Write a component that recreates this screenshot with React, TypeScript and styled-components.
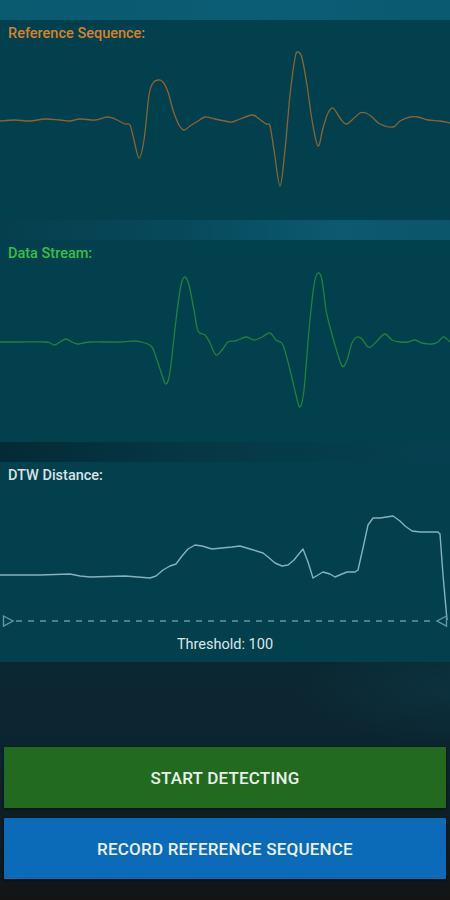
import React from 'react';
import styled, { createGlobalStyle } from 'styled-components';

type Pt = [number, number];

const GlobalStyle = createGlobalStyle`
  html, body {
    margin: 0;
    padding: 0;
    background: #141414;
  }
  body {
    font-family: Roboto, "Noto Sans", "Liberation Sans", sans-serif;
  }
`;

const Screen = styled.div`
  width: 450px;
  height: 900px;
  display: flex;
  flex-direction: column;
  overflow: hidden;
  background: #04404f;
`;

const TopBar = styled.div`
  height: 20px;
  flex: none;
  background: linear-gradient(90deg, #0a5a70 0%, #0b5d75 60%, #0a5a71 100%);
`;

const Divider = styled.div<{ $tone: 'light' | 'dark' }>`
  height: 20px;
  flex: none;
  background: ${(p) =>
    p.$tone === 'light'
      ? 'linear-gradient(90deg, #053f4d 0%, #07495b 40%, #0b5a70 75%, #0a566b 100%)'
      : 'linear-gradient(90deg, #032b35 0%, #053845 45%, #064050 100%)'};
`;

const Panel = styled.section<{ $h: number }>`
  height: ${(p) => p.$h}px;
  flex: none;
  display: flex;
  flex-direction: column;
  background: #02404e;
`;

const Label = styled.div<{ $color: string }>`
  height: 22px;
  box-sizing: border-box;
  padding: 6px 8px 0;
  font-size: 14.5px;
  line-height: 16px;
  font-weight: 500;
  color: ${(p) => p.$color};
  flex: none;
`;

const Chart = styled.svg`
  display: block;
  width: 450px;
  flex: none;
`;

const Threshold = styled.div`
  height: 20px;
  line-height: 20px;
  text-align: center;
  font-size: 14.5px;
  color: #dce6e8;
  flex: none;
`;

const Footer = styled.div`
  flex: 1;
  display: flex;
  flex-direction: column;
  justify-content: flex-end;
  gap: 10px;
  padding: 0 4px 21px;
  background:
    radial-gradient(ellipse 50% 35% at 100% 10%, rgba(14, 70, 86, 0.35), transparent 70%),
    linear-gradient(180deg, #0b2731 0%, #0b2530 40%, #0f1c21 75%, #141414 100%);
`;

const Button = styled.button<{ $bg: string }>`
  height: 61px;
  border: none;
  border-radius: 1px;
  background: ${(p) => p.$bg};
  color: #eaf1ea;
  font-family: Roboto, "Liberation Sans", sans-serif;
  font-size: 17px;
  font-weight: 500;
  letter-spacing: 0.2px;
  box-shadow: 0 1px 3px rgba(0, 0, 0, 0.6);
  cursor: pointer;
`;

const shift = (pts: Pt[], dy: number): Pt[] => pts.map(([x, y]) => [x, y - dy]);

// catmull-rom -> cubic bezier so the waves come out smooth
const smooth = (pts: Pt[]): string => {
  let d = `M${pts[0][0]},${pts[0][1]}`;
  for (let i = 0; i < pts.length - 1; i++) {
    const p0 = pts[i - 1] || pts[i];
    const p1 = pts[i];
    const p2 = pts[i + 1];
    const p3 = pts[i + 2] || p2;
    const c1x = p1[0] + (p2[0] - p0[0]) / 6;
    const c1y = p1[1] + (p2[1] - p0[1]) / 6;
    const c2x = p2[0] - (p3[0] - p1[0]) / 6;
    const c2y = p2[1] - (p3[1] - p1[1]) / 6;
    d += ` C${c1x.toFixed(1)},${c1y.toFixed(1)} ${c2x.toFixed(1)},${c2y.toFixed(1)} ${p2[0]},${p2[1]}`;
  }
  return d;
};

const reference: Pt[] = shift([
  [0, 121], [15, 120], [30, 121], [45, 119], [60, 120], [70, 121], [80, 119], [95, 120],
  [107, 117], [115, 119], [125, 124], [130, 125], [134, 140], [139, 158], [144, 140],
  [149, 95], [153, 83], [158, 80], [163, 82], [168, 92], [173, 110], [179, 125], [184, 130],
  [190, 126], [198, 121], [205, 117], [215, 119], [225, 121], [232, 122], [240, 119],
  [252, 115], [258, 118], [266, 124], [270, 126], [274, 150], [280, 186], [285, 150],
  [290, 95], [295, 58], [298, 52], [302, 58], [307, 85], [312, 120], [318, 146], [323, 128],
  [328, 113], [333, 108], [340, 118], [346, 124], [352, 120], [360, 113], [366, 113],
  [372, 117], [380, 124], [393, 127], [400, 121], [410, 117], [418, 117], [428, 120],
  [440, 121], [450, 123],
], 20);

const stream: Pt[] = shift([
  [0, 342], [20, 342], [45, 342], [50, 343], [55, 345], [60, 342], [66, 339], [72, 342],
  [78, 344], [90, 342], [120, 342], [135, 341], [145, 343], [152, 347], [157, 360],
  [162, 375], [166, 384], [170, 372], [176, 320], [181, 285], [185, 277], [189, 285],
  [194, 310], [198, 331], [205, 335], [210, 343], [216, 355], [222, 350], [228, 342],
  [235, 341], [240, 339], [247, 337], [254, 340], [262, 337], [270, 333], [276, 340],
  [283, 345], [290, 370], [296, 395], [300, 407], [304, 390], [309, 330], [314, 285],
  [318, 273], [322, 280], [326, 310], [330, 327], [335, 345], [342, 366], [347, 360],
  [352, 343], [357, 337], [362, 339], [368, 347], [372, 346], [378, 340], [385, 334],
  [392, 340], [400, 342], [408, 342], [415, 340], [422, 343], [432, 344], [438, 342],
  [443, 337], [447, 339], [450, 342],
], 240);

const distance: Pt[] = shift([
  [0, 575], [40, 575], [70, 574], [80, 576], [90, 577], [125, 576], [150, 578], [156, 576],
  [163, 570], [170, 566], [176, 564], [182, 556], [188, 549], [195, 545], [202, 546],
  [212, 549], [222, 548], [232, 547], [240, 546], [250, 549], [263, 553], [268, 557],
  [275, 563], [282, 566], [288, 565], [294, 560], [298, 555], [303, 549], [308, 562],
  [313, 578], [318, 575], [323, 572], [330, 574], [335, 577], [342, 574], [347, 572],
  [355, 572], [358, 570], [363, 548], [368, 525], [373, 518], [380, 518], [393, 516],
  [400, 521], [405, 526], [412, 531], [420, 532], [438, 532], [440, 534], [443, 575],
  [447, 620],
], 462);

const App: React.FC = () => {
  return (
    <>
      <GlobalStyle />
      <Screen>
        <TopBar />
        <Panel $h={200}>
          <Label $color="#d4822c">Reference Sequence:</Label>
          <Chart height={178} viewBox="0 22 450 178">
            <path d={smooth(reference)} fill="none" stroke="#8c6434" strokeWidth={1.3} />
          </Chart>
        </Panel>
        <Divider $tone="light" />
        <Panel $h={202}>
          <Label $color="#34c043">Data Stream:</Label>
          <Chart height={180} viewBox="0 22 450 180">
            <path d={smooth(stream)} fill="none" stroke="#24803b" strokeWidth={1.3} />
          </Chart>
        </Panel>
        <Divider $tone="dark" />
        <Panel $h={200}>
          <Label $color="#d8e2e4">DTW Distance:</Label>
          <Chart height={151} viewBox="0 22 450 151">
            <polyline
              points={distance.map((p) => p.join(',')).join(' ')}
              fill="none"
              stroke="#86b2bc"
              strokeWidth={1.4}
              strokeLinejoin="round"
            />
            <line x1={16} y1={159} x2={434} y2={159} stroke="#5f98a6" strokeWidth={1.4} strokeDasharray="6 6" />
            <polygon points="3.5,154 13,159 3.5,164" fill="none" stroke="#5f98a6" strokeWidth={1.4} />
            <polygon points="446.5,154 437,159 446.5,164" fill="none" stroke="#5f98a6" strokeWidth={1.4} />
          </Chart>
          <Threshold>Threshold: 100</Threshold>
        </Panel>
        <Footer>
          <Button $bg="#236a21">START DETECTING</Button>
          <Button $bg="#0b6bb8">RECORD REFERENCE SEQUENCE</Button>
        </Footer>
      </Screen>
    </>
  );
};

export default App;
